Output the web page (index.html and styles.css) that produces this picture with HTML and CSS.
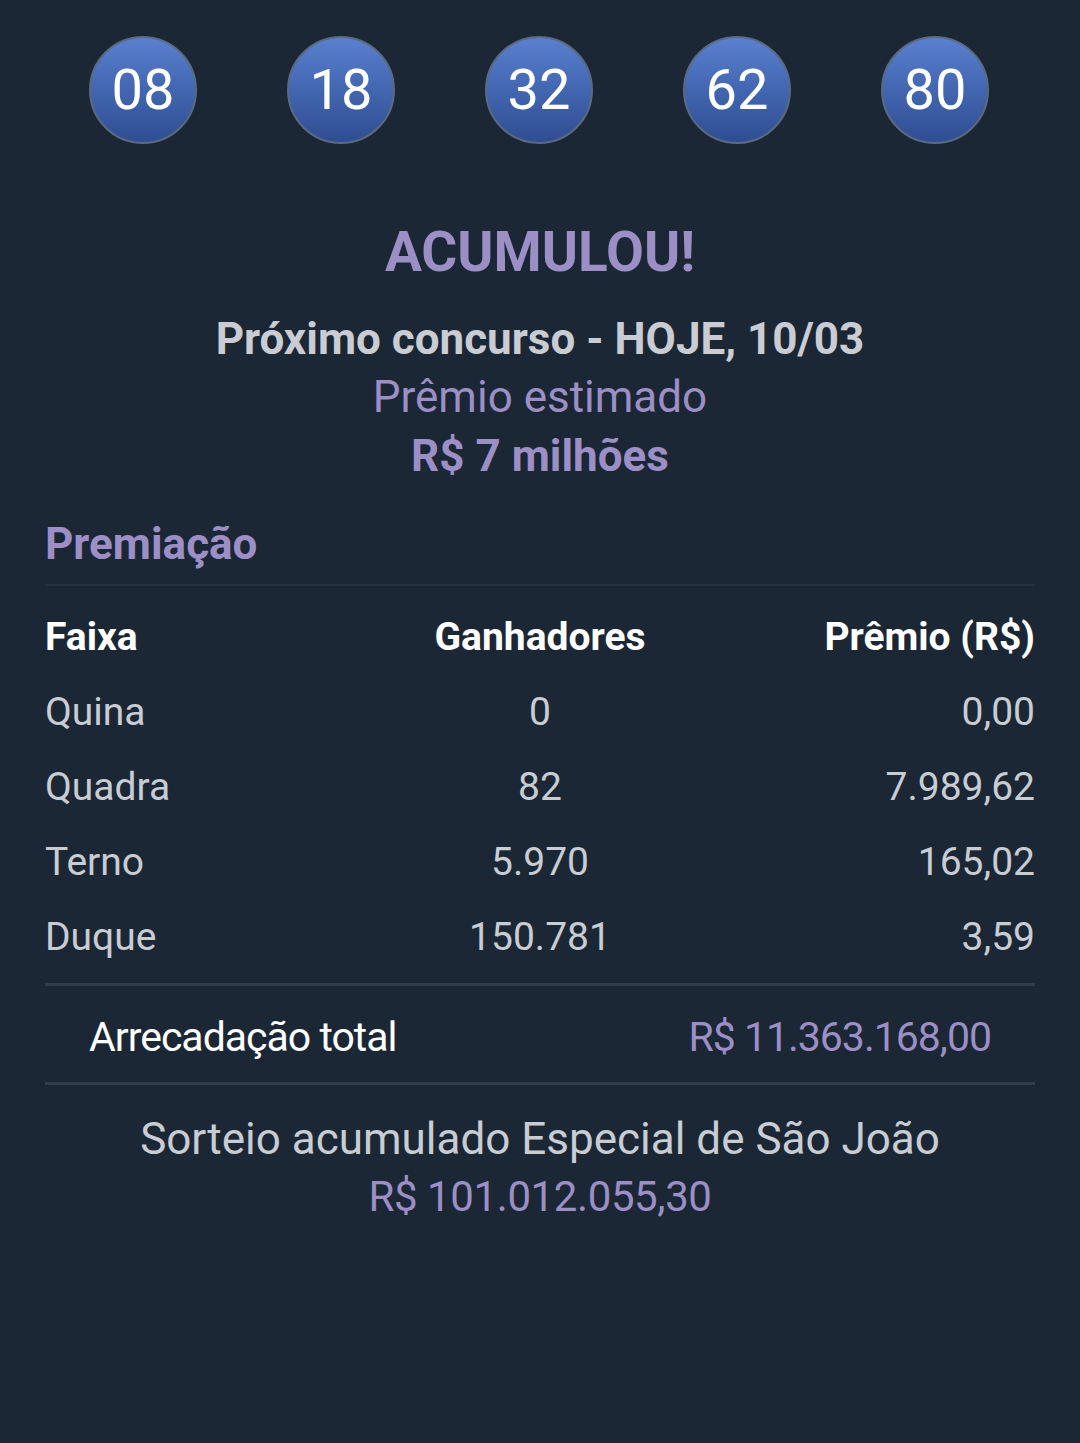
FILE: index.html
```html
<!DOCTYPE html>
<html lang="pt-BR">
<head>
<meta charset="utf-8">
<title>Resultado</title>
<link rel="stylesheet" href="styles.css">
</head>
<body>
<main class="screen">
  <div class="balls">
    <div class="ball">08</div>
    <div class="ball">18</div>
    <div class="ball">32</div>
    <div class="ball">62</div>
    <div class="ball">80</div>
  </div>

  <section class="summary">
    <h1 class="acum">ACUMULOU!</h1>
    <p class="next">Próximo concurso - HOJE, 10/03</p>
    <p class="est">Prêmio estimado</p>
    <p class="est-val">R$ 7 milhões</p>
  </section>

  <section class="prizes">
    <h2 class="prizes-title">Premiação</h2>
    <div class="table">
      <div class="row head">
        <span class="c1">Faixa</span>
        <span class="c2">Ganhadores</span>
        <span class="c3">Prêmio (R$)</span>
      </div>
      <div class="row">
        <span class="c1">Quina</span>
        <span class="c2">0</span>
        <span class="c3">0,00</span>
      </div>
      <div class="row">
        <span class="c1">Quadra</span>
        <span class="c2">82</span>
        <span class="c3">7.989,62</span>
      </div>
      <div class="row">
        <span class="c1">Terno</span>
        <span class="c2">5.970</span>
        <span class="c3">165,02</span>
      </div>
      <div class="row">
        <span class="c1">Duque</span>
        <span class="c2">150.781</span>
        <span class="c3">3,59</span>
      </div>
    </div>
    <div class="total">
      <span class="total-label">Arrecadação total</span>
      <span class="total-val">R$ 11.363.168,00</span>
    </div>
    <div class="special">
      <p class="special-label">Sorteio acumulado Especial de São João</p>
      <p class="special-val">R$ 101.012.055,30</p>
    </div>
  </section>
</main>
</body>
</html>
```

FILE: styles.css
```css
* { box-sizing: border-box; }
html, body {
  margin: 0;
  padding: 0;
  background: #1c2735;
}
body {
  font-family: Roboto, "Noto Sans", "Liberation Sans", sans-serif;
  color: #ffffff;
}
.screen {
  width: 1080px;
  height: 1443px;
  background: #1c2735;
  padding: 36px 45px 0;
}
p, h1, h2 { margin: 0; }

.balls {
  display: flex;
  justify-content: space-between;
  padding: 0 46px 0 44px;
}
.ball {
  width: 108px;
  height: 108px;
  border-radius: 50%;
  border: 2px solid #5a6a80;
  background: linear-gradient(180deg, #5a80cf 0%, #4266b0 50%, #2f4d92 100%);
  color: #ffffff;
  font-size: 56px;
  font-weight: 400;
  display: flex;
  align-items: center;
  justify-content: center;
  line-height: 1;
}

.summary {
  text-align: center;
  padding-top: 76px;
}
.acum {
  font-size: 55px;
  font-weight: 700;
  color: #9b8fc6;
  line-height: 64px;
}
.next {
  font-size: 44px;
  font-weight: 700;
  color: #c9ccd2;
  line-height: 58px;
  margin-top: 26px;
}
.est {
  font-size: 44px;
  color: #9b8fc6;
  line-height: 58px;
}
.est-val {
  font-size: 44px;
  font-weight: 700;
  color: #9b8fc6;
  line-height: 60px;
}

.prizes { padding-top: 28px; }
.prizes-title {
  font-size: 44px;
  font-weight: 700;
  color: #9b8fc6;
  line-height: 60px;
  padding-bottom: 10px;
  border-bottom: 2px solid #26313f;
}
.table { padding-top: 13px; padding-bottom: 9px; }
.row {
  display: grid;
  grid-template-columns: 1fr 1fr 1fr;
  height: 75px;
  align-items: center;
  font-size: 39px;
  color: #c8ccd3;
}
.row.head {
  font-weight: 700;
  color: #ffffff;
}
.c1 { text-align: left; }
.c2 { text-align: center; }
.c3 { text-align: right; }

.total {
  display: flex;
  justify-content: space-between;
  align-items: center;
  height: 102px;
  padding: 5px 44px 0;
  border-top: 3px solid #323d4c;
  border-bottom: 3px solid #323d4c;
  font-size: 41px;
  letter-spacing: -1px;
}
.total-label { color: #ffffff; }
.total-val { color: #9b8fc6; }

.special {
  text-align: center;
  padding-top: 26px;
  line-height: 57px;
}
.special-label { color: #c8ccd3; font-size: 44px; }
.special-val { color: #9b8fc6; font-size: 42px; letter-spacing: -0.4px; }
```
